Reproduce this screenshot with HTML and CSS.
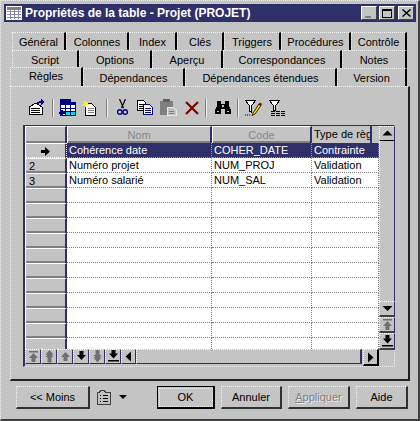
FILE: index.html
```html
<!DOCTYPE html>
<html lang="fr">
<head>
<meta charset="utf-8">
<title>Propriétés de la table</title>
<link rel="stylesheet" href="styles.css">
</head>
<body>
<svg class="defs" width="0" height="0">
  <defs>
    <symbol id="up" viewBox="0 0 13 13"><path d="M6.5 2 11 7H8.5v4h-4V7H2z"/></symbol>
    <symbol id="top" viewBox="0 0 13 13"><path d="M2 1h9v1.500H2zM6.500 3 11 8H8.500v4h-4V8H2z"/></symbol>
    <symbol id="dup" viewBox="0 0 13 13"><path d="M6.500 0 10.500 4.500H8.500L10.500 7H8.500v5.500h-4V7H2.500L4.500 4.500H2.500z"/></symbol>
    <symbol id="down" viewBox="0 0 13 13"><path d="M4.500 1h4v4H11L6.500 10 2 5h2.500z"/></symbol>
    <symbol id="ddown" viewBox="0 0 13 13"><path d="M4.500 0h4v5h2L8.500 7.500h2L6.500 12.500 2.500 7.500h2L2.500 5h2z"/></symbol>
    <symbol id="bottom" viewBox="0 0 13 13"><path d="M4.500 0h4v3.500H11L6.500 8.500 2 3.500h2.500zM1 10h11v1.500H1z"/></symbol>
    <symbol id="tleft" viewBox="0 0 13 13"><path d="M9 1.500v10L3.500 6.500z"/></symbol>
    <symbol id="tright" viewBox="0 0 13 13"><path d="M4 1.500v10l5.500-5z"/></symbol>
    <symbol id="tup" viewBox="0 0 13 13"><path d="M6.500 3.500 11.500 8.500h-10z"/></symbol>
    <symbol id="tdown" viewBox="0 0 13 13"><path d="M1.500 4h10l-5 5z"/></symbol>
  </defs>
</svg>
<div class="window">
  <header class="titlebar">
    <svg class="title-icon" viewBox="0 0 16 16" width="16" height="16" shape-rendering="crispEdges">
      <rect x="0" y="1" width="16" height="14" fill="#fff"/>
      <rect x="1" y="2" width="14" height="3" fill="#808080"/>
      <path d="M1 6h14M1 9h14M1 12h14" stroke="#8888b0"/>
      <path d="M4.500 5v9M8.500 5v9M12.500 5v9" stroke="#8888b0"/>
    </svg>
    <h1 class="title">Propriétés de la table - Projet (PROJET)</h1>
    <div class="win-btns">
      <div class="win-btn"><span class="glyph-min"></span></div>
      <div class="win-btn"><span class="glyph-max"></span></div>
      <div class="win-btn win-btn-close">
        <svg viewBox="0 0 9 8" width="9" height="8"><path d="M1 0l3.500 3L8 0l1 1-3.500 3L9 7 8 8 4.500 5 1 8 0 7l3.500-3L0 1z"/></svg>
      </div>
    </div>
  </header>

  <nav class="tabs">
    <div class="tab-row tab-row-a">
      <div class="tab">Général</div><div class="tab">Colonnes</div><div class="tab">Index</div><div class="tab">Clés</div><div class="tab">Triggers</div><div class="tab">Procédures</div><div class="tab">Contrôle</div>
    </div>
    <div class="tab-row tab-row-b">
      <div class="tab">Script</div><div class="tab">Options</div><div class="tab">Aperçu</div><div class="tab">Correspondances</div><div class="tab">Notes</div>
    </div>
    <div class="tab-row tab-row-c">
      <div class="tab tab-active">Règles</div><div class="tab">Dépendances</div><div class="tab">Dépendances étendues</div><div class="tab">Version</div>
    </div>
  </nav>

  <main class="panel">
    <div class="toolbar">
      <svg class="ti ti-props" viewBox="0 0 17 17" width="17" height="17" shape-rendering="crispEdges">
        <path d="M1 8 8 4l6 4v7H1z" fill="#fff" stroke="#000"/>
        <path d="M3 9h9M3 11h9M3 13h9" stroke="#000"/>
        <path d="M8 5c1-2 3-3 5-3V0l4 3-4 3V4c-2 0-3 1-4 2z" fill="#000080"/>
      </svg>
      <span class="sep"></span>
      <svg class="ti ti-add" viewBox="0 0 17 17" width="17" height="17" shape-rendering="crispEdges">
        <rect x="1" y="0" width="11" height="3" fill="#000080"/>
        <rect x="1" y="3" width="15" height="13" fill="#fff" stroke="#000080"/>
        <rect x="2" y="4" width="14" height="2" fill="#000080"/>
        <rect x="6" y="12" width="10" height="4" fill="#00dcdc"/>
        <path d="M6 6v10M11 6v10M2 9h14M2 12h14" stroke="#000080"/>
        <path d="M2 11h2v2h2v2H4v2H2v-2H0v-2h2z" fill="#000080"/>
      </svg>
      <svg class="ti ti-new" viewBox="0 0 17 17" width="17" height="17" shape-rendering="crispEdges">
        <path d="M4.500 4.500h6l4 4v8h-10z" fill="#fff" stroke="#000"/>
        <path d="M7 9h6M7 11h6M7 13h6" stroke="#808080"/>
        <path d="M4 0l1 3 3-1-2 2 3 2-3 0-1 3-1-3-3 1 2-3-2-2 3 1z" fill="#ffef3a"/>
      </svg>
      <span class="sep sep-b"></span>
      <svg class="ti ti-cut" viewBox="0 0 11 17" width="11" height="17">
        <path d="M2.500 0 6.500 9M8.500 0 4.500 9" stroke="#000" stroke-width="1.200" fill="none"/>
        <circle cx="2.800" cy="13" r="2.300" fill="none" stroke="#000080" stroke-width="1.400"/>
        <circle cx="8.200" cy="13" r="2.300" fill="none" stroke="#000080" stroke-width="1.400"/>
      </svg>
      <svg class="ti ti-copy" viewBox="0 0 16 15" width="16" height="15" shape-rendering="crispEdges">
        <path d="M.5.500h6l2 2v8h-8z" fill="#fff" stroke="#000"/>
        <path d="M2 4h4M2 6h4M2 8h4" stroke="#000"/>
        <path d="M6.500 4.500h6l3 3v7h-9z" fill="#fff" stroke="#000080"/>
        <path d="M8 8h6M8 10h6M8 12h6" stroke="#000080"/>
      </svg>
      <svg class="ti ti-paste" viewBox="0 0 17 17" width="17" height="17" shape-rendering="crispEdges">
        <rect x="0" y="2" width="13" height="14" fill="#808080"/>
        <rect x="3" y="0" width="7" height="3" fill="#606060"/>
        <path d="M7.500 8.500h6l3 3v5h-9z" fill="#c0c0c0" stroke="#e8e8e8"/>
        <path d="M9 12h5M9 14h5" stroke="#808080"/>
      </svg>
      <svg class="ti ti-del" viewBox="0 0 14 14" width="14" height="14">
        <path d="M1 1 13 13M13 1 1 13" stroke="#800000" stroke-width="2.200"/>
      </svg>
      <span class="sep sep-c"></span>
      <svg class="ti ti-find" viewBox="0 0 16 15" width="16" height="15" shape-rendering="crispEdges">
        <path d="M2 1h4v3h4V1h4v5l2 4v4h-6V9H6v5H0v-4l2-4z" fill="#000"/>
        <path d="M7 5h2v2H7zM2 11h2v1H2zM12 11h2v1h-2z" fill="#c0c0c0"/>
      </svg>
      <span class="sep sep-d"></span>
      <svg class="ti ti-filt1" viewBox="0 0 17 16" width="17" height="16">
        <path d="M.5.500h10L6.500 6v6l-2-1V6z" fill="#fff" stroke="#000" shape-rendering="crispEdges"/>
        <path d="M0 15h6" stroke="#000" stroke-dasharray="1 1"/>
        <path d="M8 13 14 4l2 1.500L10 14l-3 1.500z" fill="#ffd800" stroke="#000" stroke-width=".8"/>
        <path d="M13.500 4.500 15 2.500l2 1.500-1.500 2z" fill="#800000"/>
      </svg>
      <svg class="ti ti-filt2" viewBox="0 0 17 16" width="17" height="16" shape-rendering="crispEdges">
        <path d="M.5.500h10L6.500 6v4h-2V6z" fill="#fff" stroke="#000"/>
        <path d="M2 11h14M2 13h14M2 15h14" stroke="#000" stroke-dasharray="4 1"/>
      </svg>
    </div>

    <section class="grid">
      <div class="grid-main">
        <div class="grid-head">
          <div class="hcell"></div>
          <div class="hcell hcell-off">Nom</div>
          <div class="hcell hcell-off">Code</div>
          <div class="hcell hcell-type">Type de règ</div>
          <div class="hcell-fill"></div>
        </div>
        <div class="rows">
          <div class="row row-sel"><div class="rowhead rowhead-cur"><svg viewBox="0 0 9 9" width="9" height="9"><path d="M0 3h4V0l5 4.500L4 9V6H0z"/></svg></div><div class="cell">Cohérence date</div><div class="cell">COHER_DATE</div><div class="cell">Contrainte</div></div>
          <div class="row"><div class="rowhead">2</div><div class="cell">Numéro projet</div><div class="cell">NUM_PROJ</div><div class="cell">Validation</div></div>
          <div class="row"><div class="rowhead">3</div><div class="cell">Numéro salarié</div><div class="cell">NUM_SAL</div><div class="cell">Validation</div></div>
          <div class="row"><div class="rowhead"></div><div class="cell"></div><div class="cell"></div><div class="cell"></div></div>
          <div class="row"><div class="rowhead"></div><div class="cell"></div><div class="cell"></div><div class="cell"></div></div>
          <div class="row"><div class="rowhead"></div><div class="cell"></div><div class="cell"></div><div class="cell"></div></div>
          <div class="row"><div class="rowhead"></div><div class="cell"></div><div class="cell"></div><div class="cell"></div></div>
          <div class="row"><div class="rowhead"></div><div class="cell"></div><div class="cell"></div><div class="cell"></div></div>
          <div class="row"><div class="rowhead"></div><div class="cell"></div><div class="cell"></div><div class="cell"></div></div>
          <div class="row"><div class="rowhead"></div><div class="cell"></div><div class="cell"></div><div class="cell"></div></div>
          <div class="row"><div class="rowhead"></div><div class="cell"></div><div class="cell"></div><div class="cell"></div></div>
          <div class="row"><div class="rowhead"></div><div class="cell"></div><div class="cell"></div><div class="cell"></div></div>
          <div class="row"><div class="rowhead"></div><div class="cell"></div><div class="cell"></div><div class="cell"></div></div>
          <div class="row"><div class="rowhead"></div><div class="cell"></div><div class="cell"></div><div class="cell"></div></div>
        </div>
        <div class="gridnav">
          <div class="navbtn off"><svg><use href="#top"/></svg></div>
          <div class="navbtn off"><svg><use href="#dup"/></svg></div>
          <div class="navbtn off"><svg><use href="#up"/></svg></div>
          <div class="navbtn"><svg><use href="#down"/></svg></div>
          <div class="navbtn off"><svg><use href="#ddown"/></svg></div>
          <div class="navbtn"><svg><use href="#bottom"/></svg></div>
          <div class="navbtn navbtn-left"><svg><use href="#tleft"/></svg></div>
          <div class="htrack"></div>
          <div class="hright"><svg><use href="#tright"/></svg></div>
        </div>
      </div>
      <div class="vscroll">
        <div class="vbtn vbtn-top"><svg><use href="#tup"/></svg></div>
        <div class="vtrack"></div>
        <div class="vbtn"><svg><use href="#tdown"/></svg></div>
        <div class="vbtn off"><svg><use href="#top"/></svg></div>
        <div class="vbtn vbtn-last"><svg><use href="#bottom"/></svg></div>
        <div class="vcorner"></div>
      </div>
    </section>
  </main>

  <footer class="footer">
    <button class="btn btn-less">&lt;&lt; Moins</button>
    <svg class="list-icon" viewBox="0 0 14 15" width="14" height="15" shape-rendering="crispEdges">
      <path d="M.5 2.500h2l1-2h4l1 2h5v12H.500z" fill="#c0c0c0" stroke="#404040"/>
      <path d="M3 5h1M3 8h1M3 11h1M6 5h5M6 8h5M6 11h5" stroke="#000"/>
    </svg>
    <span class="tri-menu"></span>
    <button class="btn btn-ok">OK</button>
    <button class="btn btn-cancel">Annuler</button>
    <button class="btn btn-apply" disabled><span class="ul">A</span>ppliquer</button>
    <button class="btn btn-help">Aide</button>
  </footer>
</div>
</body>
</html>
```

FILE: styles.css
```css
* { box-sizing: border-box; }
html, body { margin: 0; padding: 0; background: #c0c0c0; }
.defs { display: block; height: 0; }
body { font: 11px/13px "Liberation Sans", Arial, sans-serif; color: #000; overflow: hidden; }

.window {
  width: 420px; height: 421px; padding: 3px 2px 2px 3px;
  background: #c4c4c4;
  display: flex; flex-direction: column;
  border-top: 1px dotted #eee; border-left: 1px dotted #eee;
  border-right: 2px solid #404040; border-bottom: 2px solid #404040;
}

.titlebar {
  height: 18px; background: #2f2f69; color: #fff; flex: none;
  display: flex; align-items: center; padding: 0 2px;
}
.title-icon { flex: none; }
.title { margin: 0 0 0 3px; font-size: 12px; font-weight: 700; flex: 1; white-space: nowrap; }
.win-btns { display: flex; gap: 2px; }
.win-btn:last-child { margin-left: 1px; }
.win-btn {
  width: 16px; height: 14px; background: #c4c4c4;
  border: 1px solid; border-color: #fff #404040 #404040 #fff;
  display: flex; align-items: center; justify-content: center;
}
.glyph-min { width: 6px; height: 2px; background: #808080; margin-top: 8px; margin-right: 3px; }
.glyph-max { width: 10px; height: 9px; border: 1px solid #000; border-top-width: 2px; }

.tabs { margin: 10px 0 0 6px; width: 398px; flex: none; }
.tab-row { display: grid; height: 18px; padding-left: 2px; }
.tab-row-a { grid-template-columns: 54px 63px 48px 47px 57px 70px 56px; }
.tab-row-b { grid-template-columns: 67px 73px 71px 119px 65px; }
.tab-row-c { grid-template-columns: 73px 102px 152px 70px; padding-left: 0; }
.tab {
  border-top: 1px dotted #f4f4f4; border-left: 1px dotted #f4f4f4;
  border-right: 2px solid #000;
  display: flex; align-items: center; justify-content: center;
  white-space: nowrap; padding-top: 1px;
}
.tab-active { padding-bottom: 3px; margin-top: -1px; height: 19px; background: #c4c4c4; }

.panel {
  margin-left: 6px; width: 400px; height: 295px; flex: none;
  border-top: 1px dotted #f4f4f4; border-left: 1px dotted #f4f4f4;
  border-right: 2px solid #222; border-bottom: 2px solid #222;
}
.toolbar { height: 38px; display: flex; align-items: center; padding: 3px 0 0 17px; }
.ti { flex: none; display: block; }
.sep { width: 2px; height: 18px; background: #808080; border-right: 1px solid #eee; margin: 0 5px 0 7px; flex: none; }
.ti-new { margin-left: 5px; }
.sep-b { margin: 0 9px 0 8px; }
.ti-copy { margin-left: 9px; }
.ti-paste { margin-left: 7px; }
.ti-del { margin-left: 8px; }
.sep-c { margin: 0 8px 0 6px; }
.sep-d { margin: 0 6px 0 6px; }
.ti-filt2 { margin-left: 7px; }

.grid {
  margin-left: 12px; width: 372px; height: 242px;
  border-left: 2px solid #2f2f69; border-top: 1px solid #2f2f69;
  border-right: 1px dotted #eee; border-bottom: 1px dotted #eee;
  display: flex;
}
.grid-main { width: 354px; display: flex; flex-direction: column; flex: none; }
.grid-head { display: grid; grid-template-columns: 42px 145px 100px 60px 7px; height: 17px; flex: none; }
.hcell {
  border-top: 1px solid #fff; border-left: 1px solid #fff;
  border-right: 2px solid #2f2f69; box-shadow: inset 0 -2px 0 #808080;
  display: flex; align-items: center; justify-content: center; overflow: hidden; white-space: nowrap;
}
.hcell-off { color: #888; }
.hcell-type { justify-content: flex-start; padding-left: 2px; border-top: 0; border-left: 0; box-shadow: none; }
.rows { flex: none; height: 206px; overflow: hidden; background: #fff; }
.row { display: grid; grid-template-columns: 42px 145px 100px 67px; height: 15px; }
.rowhead {
  background: #c4c4c4; padding: 1px 0 0 3px;
  border-top: 1px solid #fff; border-left: 1px solid #fff;
  border-right: 2px solid #2f2f69; box-shadow: inset 0 -2px 0 #808080;
}
.rowhead-cur { display: flex; align-items: center; justify-content: center; padding: 0; outline: 1px dotted #fff; outline-offset: -1px; box-shadow: none; }
.cell {
  border-bottom: 1px dotted #808080; border-right: 1px dotted #808080;
  padding: 1px 0 0 2px; white-space: nowrap; overflow: hidden;
}
.row-sel .cell { background: #2f2f69; color: #fff; border-color: #9a9ac0; }

.gridnav { height: 15px; display: flex; flex: none; }
.navbtn {
  width: 16px; flex: none; display: flex; align-items: center; justify-content: center;
  border-top: 1px dotted #fff; border-left: 1px dotted #fff;
  border-right: 1px solid #2f2f69; border-bottom: 1px solid #2f2f69;
}
.navbtn svg, .vbtn svg, .hright svg { width: 13px; height: 13px; display: block; fill: #000; flex: none; }
.off svg { fill: #707070; }
.navbtn-left { width: 15px; }
.htrack { flex: 1; border-top: 1px dotted #fff; border-left: 1px dotted #fff; border-right: 2px solid #2f2f69; border-bottom: 1px solid #2f2f69; margin-right: 1px; }
.hright {
  width: 16px; height: 17px; flex: none; display: flex; align-items: center; justify-content: center;
  border-top: 1px dotted #fff; border-left: 1px dotted #fff; border-right: 2px solid #000; border-bottom: 2px solid #000;
}

.vscroll { width: 16px; display: flex; flex-direction: column; flex: none; }
.vbtn {
  height: 16px; flex: none; display: flex; align-items: center; justify-content: center;
  border-top: 1px dotted #fff; border-left: 1px dotted #fff; border-right: 1px solid #2f2f69; border-bottom: 2px solid #404040;
}
.vbtn-top { height: 15px; border-bottom: 1px solid #000; }
.vtrack { height: 160px; flex: none; border-left: 1px dotted #fff; border-right: 1px solid #2f2f69; }
.vbtn-last { height: 17px; }
.vcorner { flex: 1; }

.footer {
  flex: none; display: flex; align-items: flex-start; padding: 5px 0 0 12px; width: 404px;
}
.btn {
  font: 11px "Liberation Sans", Arial, sans-serif; color: #000; padding: 0; height: 23px;
  background: #c4c4c4; border: 0; flex: none;
  border-top: 1px dotted #f4f4f4; border-left: 1px dotted #f4f4f4;
  border-right: 2px solid #303030; border-bottom: 2px solid #303030;
}
.btn-less { width: 74px; }
.list-icon { margin: 4px 0 0 7px; flex: none; }
.tri-menu { display: block; width: 0; height: 0; margin: 9px 0 0 8px; border: 4px solid transparent; border-bottom: 0; border-top: 4px solid #000; flex: none; }
.btn-ok { width: 58px; margin-left: 30px; border: 1px solid #000; border-right-width: 2px; border-bottom-width: 2px; outline: 1px dotted #eee; outline-offset: -3px; }
.btn-cancel { width: 61px; margin-left: 6px; }
.btn-apply { width: 62px; margin-left: 6px; color: #808080; text-shadow: 1px 1px 0 #eee; }
.ul { text-decoration: underline; }
.btn-help { width: 52px; margin-left: 6px; }
```
